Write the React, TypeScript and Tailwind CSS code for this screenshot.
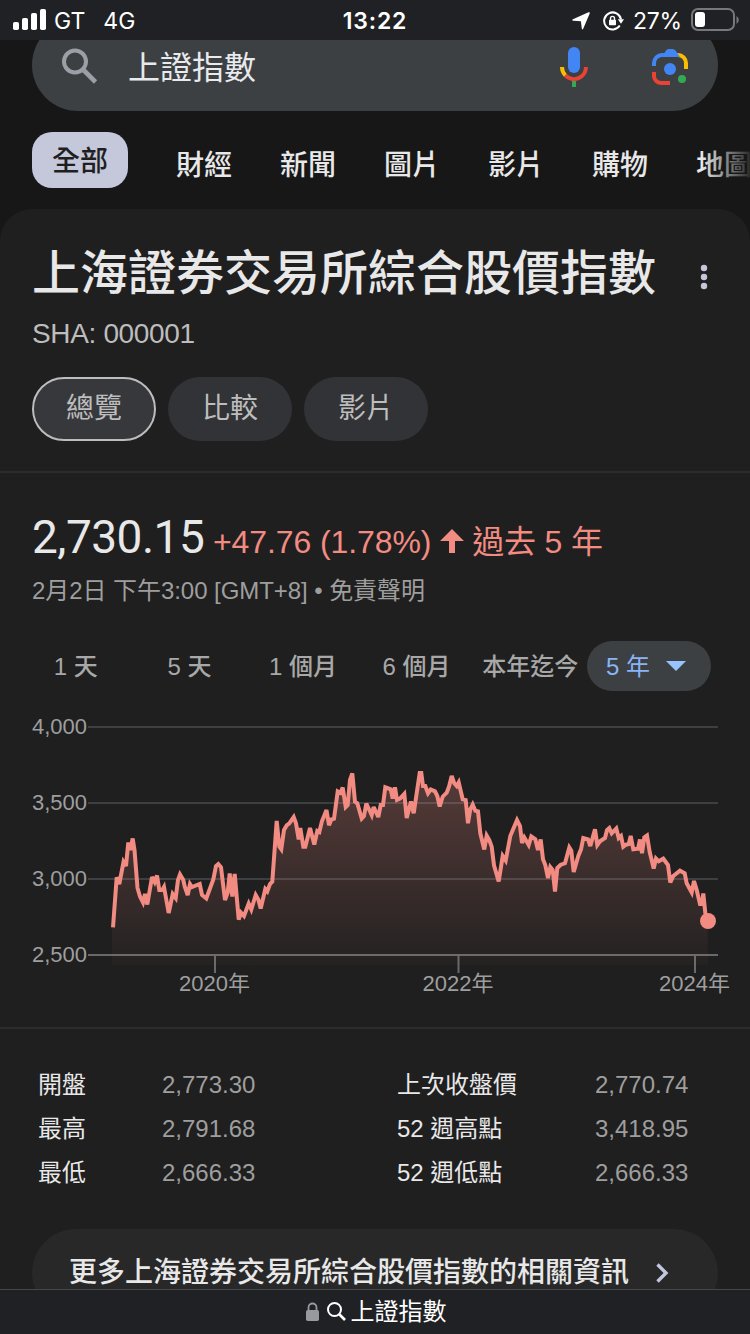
import type { ReactNode } from 'react'

const tabs = ['財經', '新聞', '圖片', '影片', '購物', '地圖']

const ranges = ['1 天', '5 天', '1 個月', '6 個月', '本年迄今']

const stats = [
  ['開盤', '2,773.30', '上次收盤價', '2,770.74'],
  ['最高', '2,791.68', '52 週高點', '3,418.95'],
  ['最低', '2,666.33', '52 週低點', '2,666.33'],
]

const gridLines = [
  { y: 727, label: '4,000' },
  { y: 803, label: '3,500' },
  { y: 879, label: '3,000' },
  { y: 955, label: '2,500' },
]

const years = [
  { x: 215, label: '2020年' },
  { x: 458.5, label: '2022年' },
  { x: 695, label: '2024年' },
]

const line =
  '113,927.3 116.7,877.3 119.3,884 123.5,862 126,866 128.3,842.5 130.3,850 132.7,838.5 134.5,850 137.5,888 140,896.5 143,902.5 145,894 147.3,904.5 152,877 154.7,882 157,875.5 159.3,890 162.3,890 164,887 168.7,913 172.7,894 175.7,898 178,880 180,874.5 183.3,880 184.7,886.5 187.7,895 190,884 192,887 199.7,884 202,895 206.3,898.5 213.3,879.5 216,866 218.3,864 221,867.3 225,900 227.7,892.5 229.7,873.5 232.3,896.5 234.7,874 238.7,919.5 241,912.7 244,916 248.7,903.5 251.3,909.5 255.7,895 258.3,899.5 260.7,908.5 265.3,889 267.3,891.3 270,884 272.3,881.7 276.7,821 279.3,846.5 281.3,849.3 284,830 286.7,825.3 289.3,823.3 293.7,817 296,823.3 298.7,839.3 300.3,828 303.3,846.7 305.3,846.7 310,828 314.3,844.5 317.3,831 319.3,832 322,821 326.5,810 329,825.3 331.3,819.5 334,818.7 337.7,791.5 340.3,793 342.7,787.5 345.7,807 347.7,805 350,780 352.3,773.5 355,801.7 357.3,803.3 361.7,818.5 364,816 366.3,803.5 371.7,815 373.7,807 378.3,817 380.7,805 383,805 385.3,787.3 390.7,789.3 392.7,798.7 395,787.3 397,800 400,798.7 404.3,794 406.7,818 411,801.5 413.7,813.3 416.7,793.3 419.7,773 421.3,773 423,786 425.3,786 428,793.3 430.7,789.5 435,791.3 437.3,796 439.7,806.5 442.7,796.7 446.7,792.7 449,786.7 451.7,776 454.3,783.3 456.7,786 458.7,782.5 462.7,799.3 465.7,800 468,823.3 470.3,809.3 472.7,804.5 475.3,810.7 478,811.3 480.3,833.3 484.3,849.5 486.7,835.5 489.3,840 491.7,846.7 494,865.3 498.7,881.5 502.7,856 505.7,860.5 510.3,836 517,820 520,826 522,843 524.3,837.5 528.7,845 531.3,836.5 535.3,839.3 538,850 540.7,839.5 543,859.3 545.3,865 548,878 550.3,867 552.7,870 555,891.5 557.3,868 560.7,864.7 565,863.3 569.3,847.5 571.3,850.7 573.7,872 578.3,856 581,849.3 583.3,838 588,839.3 590.3,846 595,829.3 597.3,845 600,841.3 605,838 607,830 609.3,828 611.7,833.3 616.3,828.5 618.7,838 621,836 623.3,846.7 626,844.7 628.7,844 630.7,836 633.3,849.3 638,848.7 640,839.5 642,853.3 644.3,837.3 647,835.5 649.7,852 653.7,868.5 656,858.5 658.7,861.3 663.3,858.7 668,865 670.3,882.5 673.3,876 680,870.7 684.7,873.3 686.7,883.3 691.7,892.5 694,881 696.7,890 700,904 702,904 703.3,893.5 705.7,916.7 707.7,921'

function Divider() {
  return <div className="h-[2px] bg-[#2b2c2e]" />
}

function Pill({ children, active }: { children: ReactNode; active?: boolean }) {
  return (
    <div
      className={
        active
          ? 'flex h-16 w-[124px] justify-center rounded-full border-2 border-[#bdbdbd] bg-[#37383c] text-[28px] leading-[60px]'
          : 'flex h-16 w-[124px] justify-center rounded-full bg-[#323337] text-[28px] leading-[64px]'
      }
    >
      {children}
    </div>
  )
}

function StatusBar() {
  return (
    <header className="grid h-10 shrink-0 grid-cols-3 items-center bg-[#202124] font-['Inter',sans-serif] text-[23px] leading-10 text-white">
      <div className="flex items-center pl-[13px]">
        <svg className="-mt-px" width="33" height="22" viewBox="0 0 33 22" fill="#fff">
          <rect x="0" y="13" width="6" height="8" rx="1.8" />
          <rect x="9" y="9" width="6" height="12" rx="1.8" />
          <rect x="18" y="4" width="6" height="17" rx="1.8" />
          <rect x="27" y="0" width="6" height="21" rx="1.8" />
        </svg>
        <span className="ml-[8px] pt-px">GT</span>
        <span className="ml-[18px] pt-px">4G</span>
      </div>
      <div className="pt-px text-center font-semibold tracking-[0.8px]">13:22</div>
      <div className="flex items-center justify-end pr-[11px]">
        <svg width="18" height="18" viewBox="0 0 18 18" fill="#fff">
          <path d="M16.500.3Q18.200-.2 17.700 1.500L11.200 16.700Q10.400 18.300 9.800 16.500L8.900 9.300 1.200 8.700Q-.6 8.200.9 7.200Z" />
        </svg>
        <svg className="ml-[13px]" width="21" height="20" viewBox="0 0 21 20" fill="none" stroke="#fff" strokeWidth="2">
          <path d="M16.8 14.5A8.5 8.5 0 1 1 18 8.4" />
          <path d="M14.8 8.3h6.2l-3 4.4z" fill="#fff" stroke="none" />
          <rect x="6" y="8.7" width="7" height="5.6" rx=".8" fill="#fff" stroke="none" />
          <path d="M7.5 9V7.4a2 2 0 0 1 4 0V9" strokeWidth="1.4" />
        </svg>
        <span className="ml-[9px] pt-px tracking-[-0.2px]">27%</span>
        <svg className="-mt-px ml-[9px]" width="48" height="24" viewBox="0 0 48 24">
          <rect x="1" y="1" width="42" height="21" rx="6" fill="none" stroke="#77787b" strokeWidth="2" />
          <rect x="4" y="4" width="10" height="15" rx="3" fill="#fff" />
          <path d="M45.5 8v8q2.3-1.4 2.3-4t-2.3-4z" fill="#77787b" />
        </svg>
      </div>
    </header>
  )
}

function SearchBar() {
  return (
    <div className="mx-8 -mt-[21px] flex h-[92px] shrink-0 items-center rounded-full bg-[#3c4043] pl-[30px] pr-[29px]">
      <svg className="mt-[2px]" width="36" height="36" viewBox="0 0 36 36" fill="none" stroke="#9aa0a6" strokeWidth="4">
        <circle cx="13" cy="13.5" r="11" />
        <path d="M22 22.5 33.5 34" strokeWidth="4.6" />
      </svg>
      <span className="ml-[30px] grow pt-[6px] text-[32px] leading-[40px] text-[#e8eaed]">上證指數</span>
      <svg className="mt-[4px]" width="28" height="40" viewBox="0 0 28 40" fill="none" strokeWidth="4">
        <rect x="8" y="0" width="12" height="26" rx="6" fill="#4285f4" />
        <path d="M12 34h4v6h-4z" fill="#34a853" />
        <path d="M5.3 28.3A12 12 0 0 0 26 20" stroke="#ea4335" />
        <path d="M2 20a12 12 0 0 0 3.3 8.3" stroke="#fbbc04" />
      </svg>
      <svg className="ml-[64px] mt-[4px]" width="37" height="38" viewBox="0 0 37 38" fill="none" strokeWidth="4">
        <path d="M2 18v-3a8 8 0 0 1 8-8h6" stroke="#4285f4" />
        <path d="M24 7h2a8 8 0 0 1 8 8v6" stroke="#fbbc04" />
        <path d="M2 24v4a7 7 0 0 0 7 7h9" stroke="#ea4335" />
        <path d="M10 9 14 2.5Q15 1 16.5 1h4Q22.5 1 23.5 2.5L28 9z" fill="#4285f4" />
        <circle cx="18" cy="21" r="6" fill="#4285f4" />
        <circle cx="30" cy="31" r="4" fill="#34a853" />
      </svg>
    </div>
  )
}

function Chart() {
  return (
    <svg className="block" width="750" height="300" viewBox="0 700 750 300" fontSize="22" fill="#9e9e9e">
      <defs>
        <linearGradient id="area" x1="0" y1="773" x2="0" y2="965" gradientUnits="userSpaceOnUse">
          <stop offset="0" stopColor="#f28b82" stopOpacity="0.26" />
          <stop offset="1" stopColor="#f28b82" stopOpacity="0.025" />
        </linearGradient>
      </defs>
      {gridLines.map(({ y, label }) => (
        <g key={y}>
          <text x="32" y={y + 7}>{label}</text>
          <path d={`M88 ${y}H718`} stroke={y === 955 ? '#68696a' : '#3c4043'} strokeWidth="2" />
        </g>
      ))}
      {years.map(({ x, label }) => (
        <g key={x}>
          <path d={`M${x} 956v17`} stroke="#68696a" strokeWidth="2" />
          <text x={x - 0.5} y="991" textAnchor="middle">{label}</text>
        </g>
      ))}
      <polygon points={`112,965 112,927 ${line} 707.7,965`} fill="url(#area)" />
      <polyline points={line} fill="none" stroke="#f28b82" strokeWidth="4" strokeMiterlimit="3" />
      <circle cx="708" cy="921" r="8" fill="#f28b82" />
    </svg>
  )
}

export default function App() {
  return (
    <div className="flex h-[1334px] w-[750px] flex-col overflow-hidden bg-[#171717] font-['Liberation_Sans','Noto_Sans_CJK_TC',sans-serif]">
      <StatusBar />

      <main className="flex min-h-0 grow flex-col overflow-hidden">
        <SearchBar />

        <nav className="relative mt-[21px] flex h-14 w-[750px] shrink-0 gap-12 overflow-hidden pl-8 text-[28px] font-medium text-[#e8e8e8]">
          <div className="h-14 w-24 shrink-0 rounded-[20px] bg-[#c5c7da] text-center leading-[60px] text-[#1f1f1f]">全部</div>
          {tabs.map((t) => (
            <div key={t} className="shrink-0 leading-[68px]">{t}</div>
          ))}
          <div className="absolute right-0 top-0 h-full w-12 bg-gradient-to-l from-[#171717]/90 to-transparent" />
        </nav>

        <section className="mt-[21px] flex shrink-0 flex-col rounded-t-[32px] bg-[#1f1f1f] text-[#bdbdbd]">
          <div className="flex h-[98px] items-center justify-between pl-8 pr-[42px] pt-[32px]">
            <h1 className="text-[48px] font-medium leading-[64px] text-[#e8e8e8]">上海證券交易所綜合股價指數</h1>
            <svg className="mt-[6px]" width="8" height="26" viewBox="0 0 8 26" fill="#c3c6dd">
              <circle cx="4" cy="4" r="3.2" />
              <circle cx="4" cy="13" r="3.2" />
              <circle cx="4" cy="22" r="3.2" />
            </svg>
          </div>
          <div className="mt-[7px] h-[39px] pl-8 text-[28px] leading-10 tracking-[-0.35px]">SHA: 000001</div>
          <div className="mt-[24px] flex gap-3 pl-8 pb-[30px]">
            <Pill active>總覽</Pill>
            <Pill>比較</Pill>
            <Pill>影片</Pill>
          </div>
          <Divider />

          <div className="mt-[36px] flex h-[60px] items-baseline pl-8 text-[32px] text-[#f28b82]">
            <span className="w-[181px] font-['Roboto',sans-serif] text-[46px] leading-[56px] tracking-[-0.5px] text-[#e8e8e8]">2,730.15</span>
            <span className="tracking-[-0.1px]">+47.76 (1.78%)</span>
            <svg className="ml-[9px]" width="24" height="24" viewBox="0 0 24 24" fill="#f28b82">
              <path d="M12 0 24 12H15v12H9V12H0z" />
            </svg>
            <span className="ml-[8px] tracking-[-0.2px]">過去 5 年</span>
          </div>
          <div className="mt-[6px] pl-8 text-[24px] leading-[32px] tracking-[-0.06px] text-[#9e9e9e]">2月2日 下午3:00 [GMT+8] • 免責聲明</div>

          <div className="mt-[34px] flex h-[50px] items-center pl-[19px] text-[24px] font-medium leading-[48px] text-[#a8a8a8]">
            {ranges.map((r) => (
              <div key={r} className="w-[113.6px] shrink-0 pt-[2px] text-center">{r}</div>
            ))}
            <div className="flex h-[50px] w-[124px] items-center gap-[16px] rounded-full bg-[#3c4043] pl-[19px] font-normal text-[#8ab4f8]">
              <span className="pt-[2px]">5 年</span>
              <svg width="20" height="10" viewBox="0 0 20 10" fill="#99c3ff">
                <path d="M0 0h20L10 10z" />
              </svg>
            </div>
          </div>

          <div className="mt-[9px]">
            <Chart />
          </div>
          <div className="mt-[27px]">
            <Divider />
          </div>

          <div className="mt-[34px] flex flex-col text-[24px] leading-[44px]">
            {stats.map(([a, b, c, d]) => (
              <div key={a} className="grid h-11 grid-cols-[124px_235px_198px_1fr] pl-[38px]">
                <span className="text-[#e8e8e8]">{a}</span>
                <span className="text-[#9e9e9e]">{b}</span>
                <span className="text-[#e8e8e8]">{c}</span>
                <span className="text-[#9e9e9e]">{d}</span>
              </div>
            ))}
          </div>

          <div className="mx-8 mt-[34px] flex h-[88px] items-center rounded-full bg-[#282828] pl-[37px] text-[28px] font-medium leading-[88px] text-[#e8e8e8]">
            更多上海證券交易所綜合股價指數的相關資訊
            <svg className="ml-[27px]" width="13" height="20" viewBox="0 0 13 20" fill="none" stroke="#c3c6dd" strokeWidth="3.4">
              <path d="m1.5 1.5 8.5 8.5-8.5 8.5" />
            </svg>
          </div>
        </section>
      </main>

      <footer className="flex h-[45px] shrink-0 items-center justify-center border-t border-[#46474a] bg-[#202124] pl-[2px] text-[24px] leading-[44px] text-white">
        <svg className="-mt-[2px]" width="13" height="19" viewBox="0 0 13 19" fill="none">
          <rect x="0" y="8" width="13" height="11" rx="1.8" fill="#98989f" />
          <path d="M2.5 9V5.5a4 4 0 0 1 8 0V9" stroke="#98989f" strokeWidth="1.8" />
        </svg>
        <svg className="-mt-px ml-[8px] mr-[5px]" width="19" height="19" viewBox="0 0 19 19" fill="none" stroke="#fff" strokeWidth="2">
          <circle cx="7.5" cy="7.5" r="6.5" />
          <path d="m12 12 6 6" strokeWidth="2.6" />
        </svg>
        <span>上證指數</span>
      </footer>
    </div>
  )
}
